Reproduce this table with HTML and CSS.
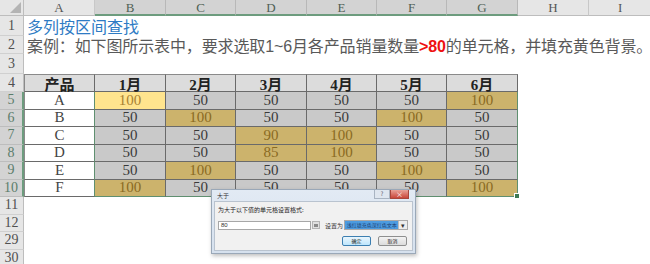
FILE: index.html
```html
<!DOCTYPE html>
<html>
<head>
<meta charset="utf-8">
<link rel="stylesheet" href="styles.css">
</head>
<body>
<div class="sheet">
  <div class="corner"><span class="tri"></span></div>
  <div class="ch">A</div>
  <div class="ch sel">B</div>
  <div class="ch sel">C</div>
  <div class="ch sel">D</div>
  <div class="ch sel">E</div>
  <div class="ch sel">F</div>
  <div class="ch sel">G</div>
  <div class="ch">H</div>
  <div class="ch last-col">I</div>

  <div class="rh">1</div>
  <div class="title">多列按区间查找</div>

  <div class="rh">2</div>
  <div class="desc">案例：如下图所示表中，要求选取<span class="lat">1~6</span>月各产品销量数量<span class="red">&gt;80</span>的单元格，并填充黄色背景。</div>

  <div class="rh">3</div>
  <div class="blank"></div>

  <div class="rh">4</div>
  <div class="th first">产品</div>
  <div class="th">1月</div>
  <div class="th">2月</div>
  <div class="th">3月</div>
  <div class="th">4月</div>
  <div class="th">5月</div>
  <div class="th">6月</div>
  <div class="blank2"></div>

  <div class="rh sel">5</div>
  <div class="pc">A</div>
  <div class="td act">100</div>
  <div class="td">50</div>
  <div class="td">50</div>
  <div class="td">50</div>
  <div class="td">50</div>
  <div class="td hi last">100</div>
  <div class="blank2"></div>

  <div class="rh sel">6</div>
  <div class="pc">B</div>
  <div class="td">50</div>
  <div class="td hi">100</div>
  <div class="td">50</div>
  <div class="td">50</div>
  <div class="td hi">100</div>
  <div class="td last">50</div>
  <div class="blank2"></div>

  <div class="rh sel">7</div>
  <div class="pc">C</div>
  <div class="td">50</div>
  <div class="td">50</div>
  <div class="td hi">90</div>
  <div class="td hi">100</div>
  <div class="td">50</div>
  <div class="td last">50</div>
  <div class="blank2"></div>

  <div class="rh sel">8</div>
  <div class="pc">D</div>
  <div class="td">50</div>
  <div class="td">50</div>
  <div class="td hi">85</div>
  <div class="td hi">100</div>
  <div class="td">50</div>
  <div class="td last">50</div>
  <div class="blank2"></div>

  <div class="rh sel">9</div>
  <div class="pc">E</div>
  <div class="td">50</div>
  <div class="td hi">100</div>
  <div class="td">50</div>
  <div class="td">50</div>
  <div class="td hi">100</div>
  <div class="td last">50</div>
  <div class="blank2"></div>

  <div class="rh sel">10</div>
  <div class="pc">F</div>
  <div class="td hi bot">100</div>
  <div class="td bot">50</div>
  <div class="td bot">50</div>
  <div class="td bot">50</div>
  <div class="td bot">50</div>
  <div class="td hi bot last">100<span class="handle"></span></div>
  <div class="blank2"></div>

  <div class="rh">11</div>
  <div class="blank"></div>
  <div class="rh">12</div>
  <div class="blank"></div>
  <div class="rh">29</div>
  <div class="blank"></div>
  <div class="rh">30</div>
  <div class="blank"></div>
</div>

<div class="dlg">
  <div class="dlg-bar">
    <span class="dlg-title">大于</span>
    <span class="dlg-btns"><span class="q">?</span><span class="x">×</span></span>
  </div>
  <div class="dlg-body">
    <div class="dlg-label">为大于以下值的单元格设置格式:</div>
    <div class="dlg-row">
      <div class="inp">80</div>
      <div class="refbtn"><span></span></div>
      <div class="setlbl">设置为</div>
      <div class="sel-box"><span class="opt">浅红填充色深红色文本</span><span class="arr">▾</span></div>
    </div>
    <div class="dlg-actions">
      <div class="btn ok">确定</div>
      <div class="btn">取消</div>
    </div>
  </div>
</div>
</body>
</html>
```

FILE: styles.css
```css
html, body {
  margin: 0;
  padding: 0;
  overflow: hidden;
  background: #ffffff;
}
body {
  position: relative;
  width: 650px;
  height: 264px;
}
.sheet {
  display: grid;
  grid-template-columns: 24px 71px 71px 70px 71px 70px 70px 71px 71px 1fr;
  grid-template-rows: 16px 20px 18px 20px 18px repeat(6, 17.5px) repeat(4, 17.5px);
  width: 650px;
  font-family: "Liberation Serif", serif;
}
.corner {
  background: #e6e6e6;
  border-right: 1px solid #bdbdbd;
  border-bottom: 1px solid #bdbdbd;
  box-sizing: border-box;
  position: relative;
}
.tri {
  position: absolute;
  right: 2px;
  bottom: 2px;
  width: 0;
  height: 0;
  border-left: 11px solid transparent;
  border-bottom: 11px solid #b4b4b4;
}
.ch {
  background: #e6e6e6;
  border-right: 1px solid #c8c8c8;
  border-bottom: 1px solid #bdbdbd;
  box-sizing: border-box;
  color: #555;
  font-size: 13px;
  line-height: 15px;
  text-align: center;
}
.ch.last-col {
  border-right: none;
  text-align: left;
  padding-left: 29px;
}
.ch.sel {
  background: #d3d3d3;
  color: #4f5f55;
  border-bottom: 2px solid #6d9c7e;
  border-right-color: #b8b8b8;
}
.rh {
  background: #e6e6e6;
  border-right: 1px solid #bdbdbd;
  border-bottom: 1px solid #d0d0d0;
  box-sizing: border-box;
  color: #505050;
  font-size: 14px;
  text-align: center;
  display: flex;
  align-items: center;
  justify-content: center;
}
.rh.sel {
  background: #d3d3d3;
  color: #5b7d6b;
  border-right: 2px solid #6d9c7e;
  border-bottom-color: #bdbdbd;
}
.title {
  grid-column: 2 / -1;
  font-family: "Noto Sans CJK SC", sans-serif;
  font-size: 16px;
  color: #2e7bc4;
  line-height: 20px;
  padding-left: 3px;
  white-space: nowrap;
}
.desc {
  grid-column: 2 / -1;
  font-family: "Noto Sans CJK SC", sans-serif;
  font-size: 16px;
  letter-spacing: -0.12px;
  color: #595959;
  line-height: 18px;
  padding-left: 3px;
  white-space: nowrap;
}
.lat {
  font-family: "Liberation Sans", sans-serif;
}
.red {
  font-family: "Liberation Sans", sans-serif;
  font-weight: bold;
  color: #ee1111;
}
.blank { grid-column: 2 / -1; }
.blank2 { grid-column: 9 / -1; }
.th, .pc, .td {
  box-sizing: border-box;
  border-right: 1px solid #6a6a6a;
  border-bottom: 1px solid #6a6a6a;
  text-align: center;
  display: flex;
  align-items: center;
  justify-content: center;
  font-family: "Liberation Serif", "Noto Sans CJK SC", serif;
  font-size: 15px;
  color: #333;
}
.th {
  background: #dcdcdc;
  border-top: 1px solid #8a8a8a;
  font-weight: bold;
  color: #222;
}
.th.first { border-left: 1px solid #8a8a8a; }
.pc {
  background: #ffffff;
  border-left: 1px solid #8a8a8a;
  border-right: 1px solid #5f8f70;
  color: #444;
}
.td {
  position: relative;
  background: #c9c9c9;
  color: #3a3a3a;
}
.td.hi {
  background: #ccb36c;
  color: #8a6a22;
}
.td.act {
  background: #ffe48e;
  color: #a88132;
}
.td.last { border-right: 1px solid #5f8f70; }
.td.bot { border-bottom: 1px solid #5f8f70; }
.handle {
  position: absolute;
  right: -3px;
  bottom: -3px;
  width: 4px;
  height: 4px;
  background: #3e7a55;
  border: 1px solid #fff;
}

/* dialog */
.dlg {
  position: absolute;
  left: 211px;
  top: 189px;
  width: 205px;
  height: 65px;
  box-sizing: border-box;
  border: 1px solid #9aa8b8;
  background: linear-gradient(#e2eaf4, #d6e1ee);
  box-shadow: 1px 2px 4px rgba(0,0,0,0.25);
  display: flex;
  flex-direction: column;
  font-family: "Noto Sans CJK SC", sans-serif;
}
.dlg-bar {
  height: 11px;
  display: flex;
  justify-content: space-between;
  align-items: flex-start;
  padding: 0 6px 0 5px;
}
.dlg-title {
  font-size: 6px;
  line-height: 11px;
  color: #333;
}
.dlg-btns {
  display: flex;
}
.dlg-btns .q {
  width: 14px;
  height: 8px;
  font-size: 6px;
  line-height: 8px;
  text-align: center;
  color: #556;
  background: #dfe6ef;
  border: 1px solid #a9b4c2;
  border-top: none;
}
.dlg-btns .x {
  width: 17px;
  height: 8px;
  font-size: 7px;
  line-height: 8px;
  text-align: center;
  color: #fff;
  background: linear-gradient(#e9a197, #c9463a);
  border: 1px solid #a8463c;
  border-top: none;
}
.dlg-body {
  flex: 1;
  margin: 0 2px 2px;
  background: #f1f1f1;
  border: 1px solid #b9c3cf;
  padding: 3px 4px 0 3px;
  display: flex;
  flex-direction: column;
}
.dlg-label {
  font-size: 6px;
  line-height: 10px;
  color: #222;
}
.dlg-row {
  display: flex;
  align-items: center;
  margin-top: 5px;
  height: 10px;
}
.inp {
  width: 94px;
  height: 9px;
  box-sizing: border-box;
  border: 1px solid #a7a7a7;
  background: #fff;
  font-family: "Liberation Sans", sans-serif;
  font-size: 6px;
  line-height: 7px;
  padding-left: 2px;
  color: #333;
}
.refbtn {
  width: 8px;
  height: 8px;
  margin-left: 1px;
  background: #e0e0e0;
  border: 1px solid #b4b4b4;
  box-sizing: border-box;
  display: flex;
  align-items: center;
  justify-content: center;
}
.refbtn span {
  width: 4px;
  height: 3px;
  background: #8a8a8a;
}
.setlbl {
  font-size: 6px;
  color: #333;
  margin-left: 5px;
  width: 19px;
}
.sel-box {
  width: 65px;
  height: 10px;
  box-sizing: border-box;
  border: 1px solid #a9a9a9;
  background: #fff;
  display: flex;
  align-items: stretch;
}
.opt {
  flex: 1;
  background: #4c9be0;
  color: #1d3d70;
  font-size: 5px;
  line-height: 8px;
  padding-left: 2px;
  white-space: nowrap;
  overflow: hidden;
}
.arr {
  width: 8px;
  font-size: 7px;
  line-height: 8px;
  text-align: center;
  color: #333;
  background: #ececec;
  border-left: 1px solid #bbb;
}
.dlg-actions {
  display: flex;
  justify-content: flex-end;
  gap: 7px;
  margin-top: 6px;
  padding-right: 1px;
}
.btn {
  width: 29px;
  height: 10px;
  box-sizing: border-box;
  border: 1px solid #8e8f8f;
  border-radius: 2px;
  background: linear-gradient(#f3f3f3, #dcdcdc);
  font-size: 5px;
  line-height: 8px;
  text-align: center;
  color: #222;
}
.btn.ok {
  border-color: #3c7fb1;
  background: linear-gradient(#eaf6fd, #bee6fd);
}
```
